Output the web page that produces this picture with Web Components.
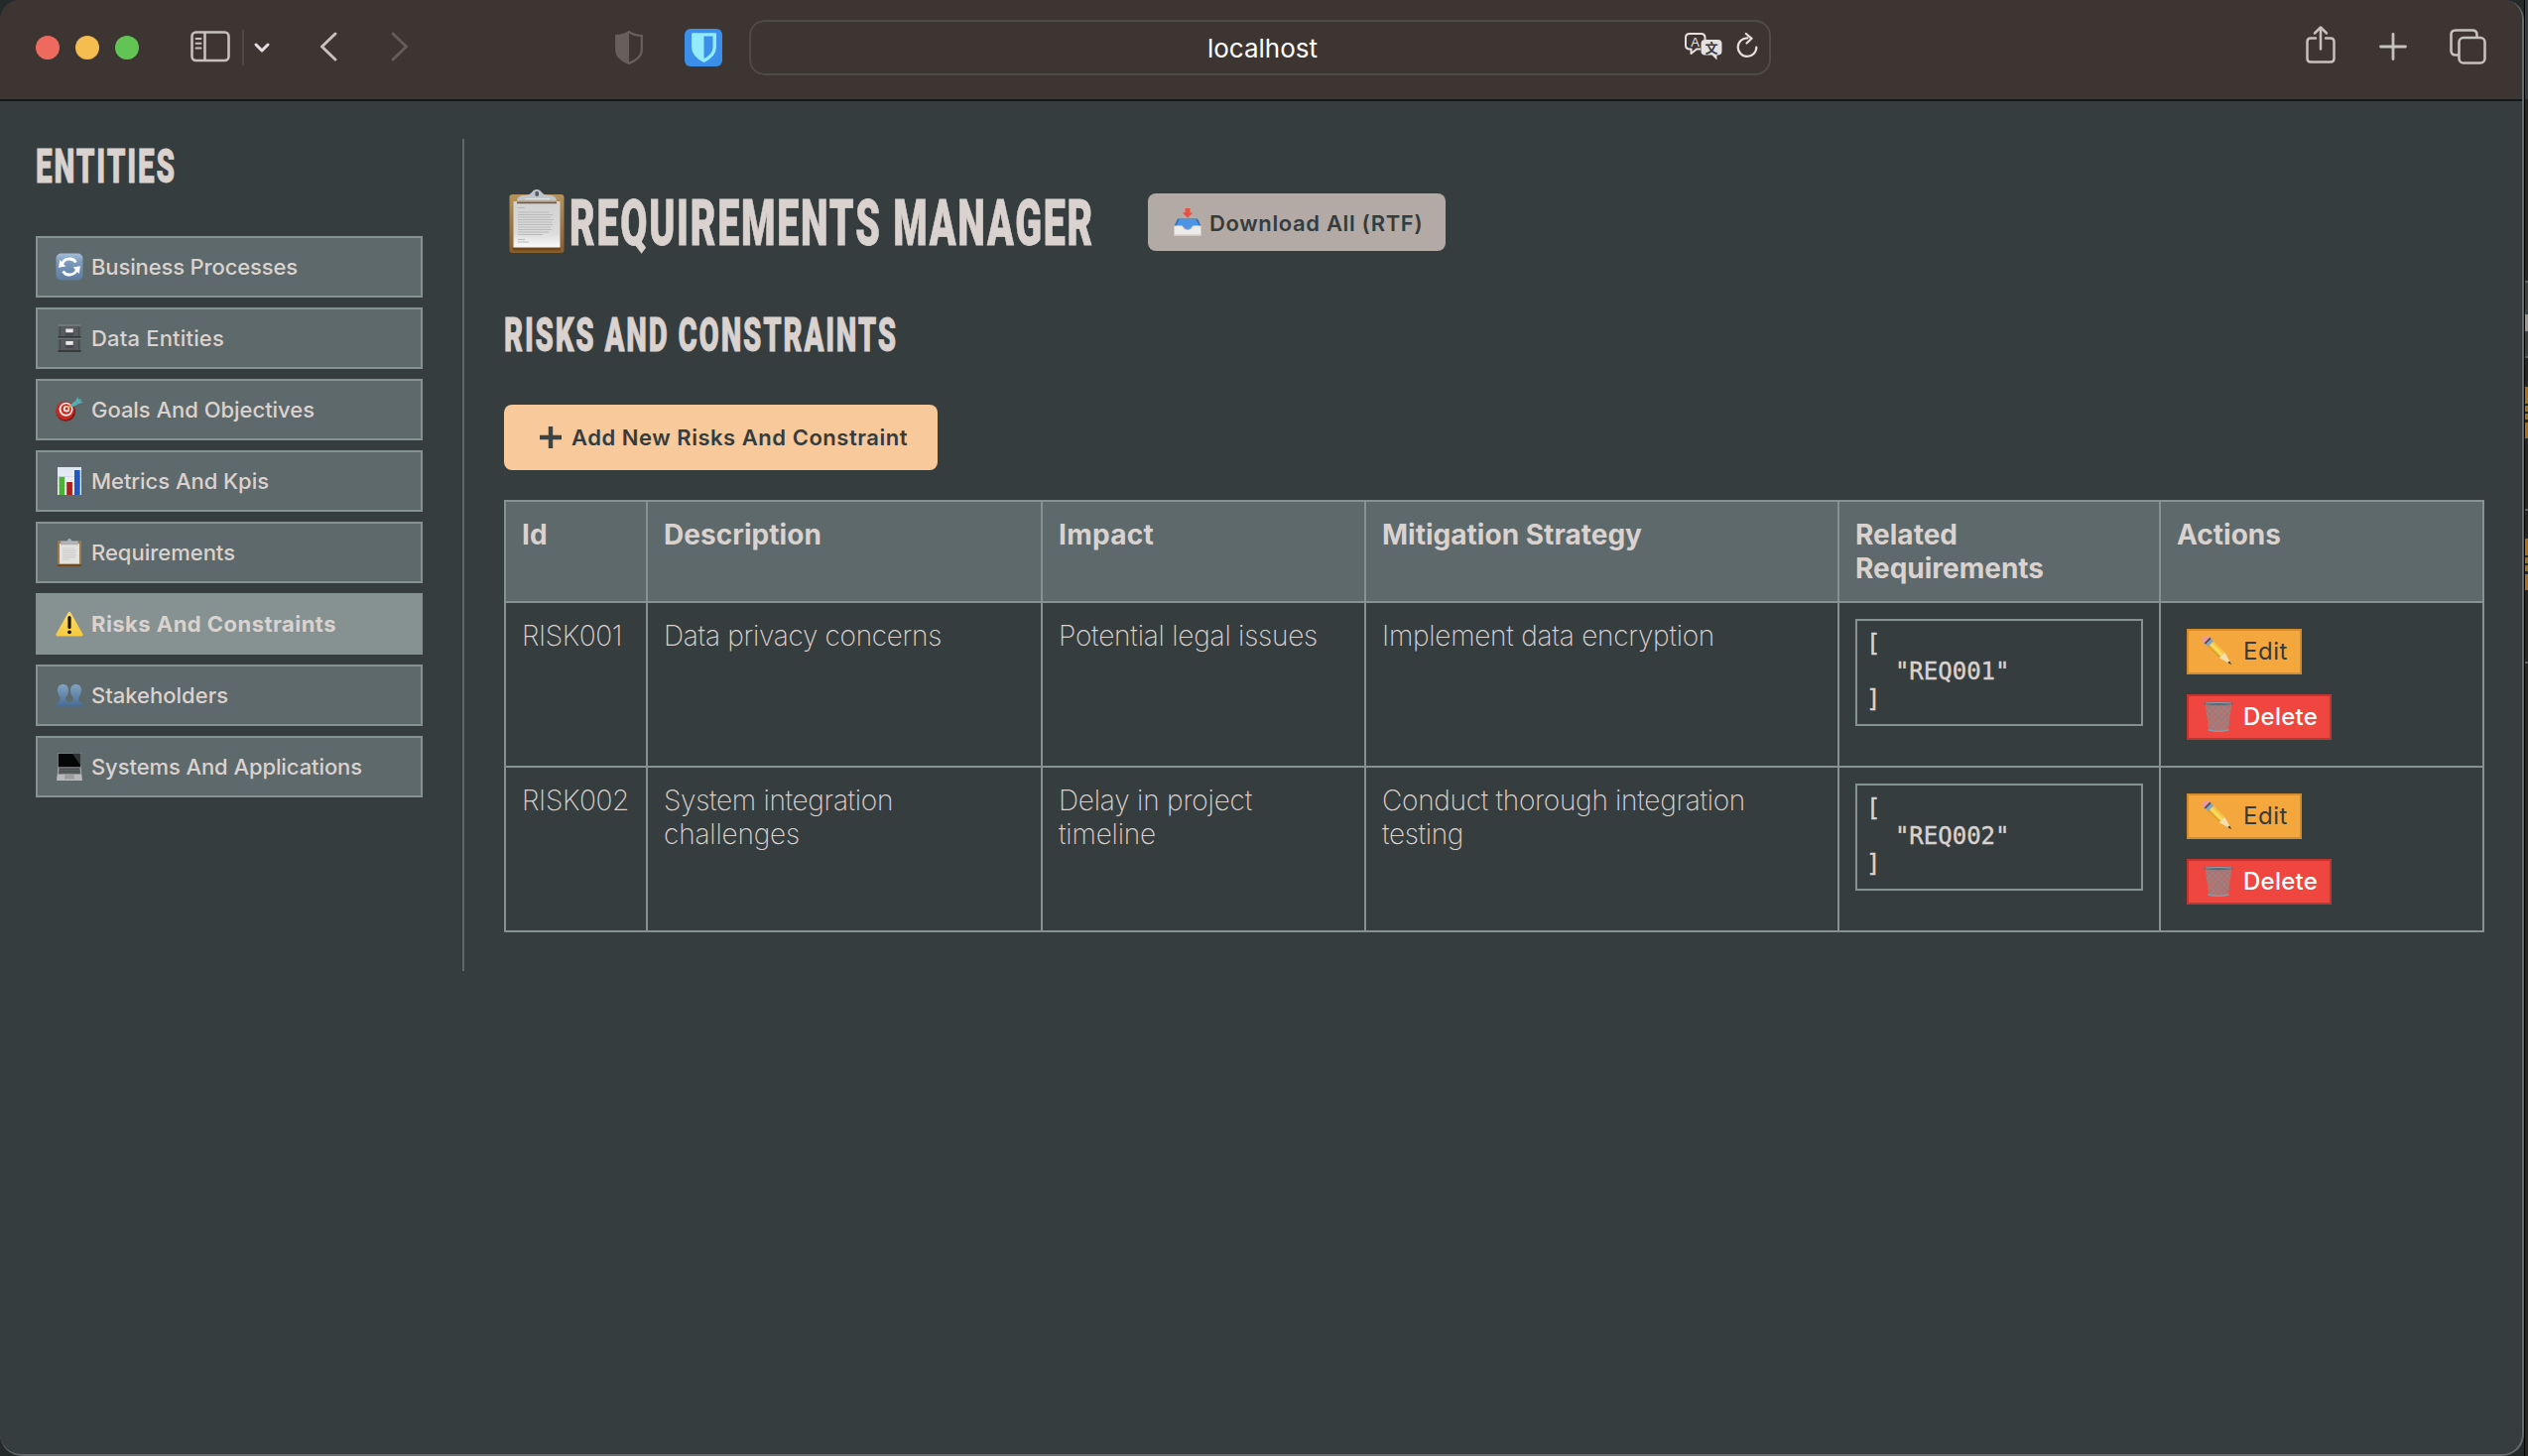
<!DOCTYPE html>
<html lang="en">
<head>
<meta charset="utf-8">
<title>Requirements Manager</title>
<style>
html,body{margin:0;padding:0}
body{width:2548px;height:1468px;overflow:hidden;background:#24292a;font-family:Inter,"Liberation Sans",sans-serif;color:#dad2cf}
</style>
</head>
<body>
<app-desktop></app-desktop>
<script>
const ICONS = {
sync:['0 0 28 28','<defs><linearGradient id="g" x2="0" y2="1"><stop stop-color="#a5bdd8"/><stop offset=".3" stop-color="#7d9dbf"/><stop offset="1" stop-color="#5c7b9e"/></linearGradient></defs><rect x=".5" y=".5" width="27" height="27" rx="5" fill="url(#g)"/><g fill="none" stroke="#fff" stroke-width="2.8"><path d="M6 12.5C8 5 17 4 20.500 9.500"/><path d="M22 15.500C20 23 11 24 7.500 18.500"/></g><path d="M3.300 8.500v7.800l7-2.200zM24.700 19.500v-7.800l-7 2.200z" fill="#fff" transform="rotate(8 14 14)"/>'],
cabinet:['0 0 28 28','<rect x="2.500" y="0" width="23" height="28" fill="#565b5e"/><path d="M2.500 1h23M2.500 14h23" stroke="#8b8f91" stroke-width="1.200"/><path d="M2.500 27h23M2.500 12.800h23" stroke="#35393c" stroke-width="1.800"/><path d="M4.500 2v10M23.500 2v10M4.500 15v10.500M23.500 15v10.500" stroke="#44494c"/><rect x="9.800" y="7.500" width="8.400" height="4" rx="1" fill="#45494b"/><rect x="9.800" y="20" width="8.400" height="4" rx="1" fill="#45494b"/><rect x="10.300" y="4.500" width="7.400" height="3.800" fill="#e8e8e8"/><rect x="10.300" y="17" width="7.400" height="3.800" fill="#e8e8e8"/>'],
target:['0 0 28 28','<circle cx="10.300" cy="16" r="9.800" fill="#7e1510"/><circle cx="9.600" cy="14.800" r="9.400" fill="#c22a20"/><circle cx="10.500" cy="13.800" r="7" fill="#f1e7e4"/><circle cx="10.700" cy="13.500" r="5.200" fill="#c9281f"/><circle cx="11" cy="13.300" r="3.200" fill="#f1e7e4"/><circle cx="11.200" cy="13.100" r="1.500" fill="#b8231a"/><path d="M12 12.500L19 7.500" stroke="#d7b54a" stroke-width="1.500"/><path d="M14.500 9.500L20 5.300l2.500-4.300 .6 2.800 3-.6-1 2.400 2.900.8-5 1.800-6.200 3.400z" fill="#56aeb4"/>'],
chart:['0 0 28 28','<defs><linearGradient id="c" x2="0" y2="1"><stop stop-color="#dfe7f2"/><stop offset="1" stop-color="#f4f5f6"/></linearGradient></defs><rect x="2" y="0" width="24" height="28" fill="url(#c)"/><path d="M2 9.500h24M2 18.500h24" stroke="#c9d3de" stroke-width=".7"/><rect x="3.500" y="9.800" width="5.700" height="18.200" fill="#4eb137"/><rect x="11.200" y="15" width="5.700" height="13" fill="#ac2019"/><rect x="19" y="3" width="5.700" height="25" fill="#2057c0"/>'],
clip:['0 0 58 64','<defs><linearGradient id="w" x2="0" y2="1"><stop stop-color="#b4935c"/><stop offset="1" stop-color="#855e2c"/></linearGradient><linearGradient id="p" x2="0" y2="1"><stop stop-color="#d2d2d2"/><stop offset=".7" stop-color="#dcdcdc"/><stop offset="1" stop-color="#fafafa"/></linearGradient></defs><rect x="1.500" y="5" width="55" height="59" rx="3" fill="url(#w)"/><path d="M5 58h48v3.500H5z" fill="#6d4719"/><path d="M5.500 12h47v46.500h-47z" fill="url(#p)"/><path d="M9 12.500h40v1.700H9z" fill="#68584b"/><path d="M9 11.500c0-6 7-5.300 11-6 4-.8 4.500-5.500 9-5.500s5 4.700 9 5.500c4 .7 11 0 11 6z" fill="#bfc5cd"/><path d="M17 9.500h25" stroke="#dfe3e7"/><rect x="27.400" y="1.700" width="3.600" height="5.300" rx="1.800" fill="#535c61"/><g stroke="#bababa" stroke-width="1.100"><path d="M10 18.500h7M10 23h31M10 25.500h35M10 28h33M10 30.500h36M10 33h34M10 35.500h35M10 38h33M10 40.500h34M10 43h31M10 45.500h25M10 50.500h7M10 53h11"/></g>'],
clipsmall:['0 0 28 28','<rect x="2" y="2" width="24" height="26" rx="1.200" fill="#9b7a4c"/><path d="M2 26h24v2H2z" fill="#6d4922"/><path d="M4 5h20v20.500H4z" fill="#e3e2e0"/><path d="M5 5.800h18M5 2.500h18V5H5z" fill="#b9bdc2" stroke="#8a8580" stroke-width=".5"/><path d="M11 3.500c1-1.500 1.500-3.500 3-3.500s2 2 3 3.500z" fill="#9fb2bd"/><path d="M7 10h12M7 12.200h14M7 14.400h13M7 16.600h14M7 18.800h13M7 21h7" stroke="#cecdcc" stroke-width="1.200"/>'],
warn:['0 0 28 28','<defs><linearGradient id="y" x2="0" y2="1"><stop stop-color="#fbdc68"/><stop offset="1" stop-color="#f7c93f"/></linearGradient></defs><path d="M12.600 2.800Q14 .7 15.400 2.800L27.600 24.500Q28 26.200 26.300 26.500H1.700Q0 26.200.4 24.500z" fill="url(#y)"/><path d="M14 7.500v10" stroke="#1a1508" stroke-width="3.200" stroke-linecap="round"/><circle cx="14" cy="22.300" r="1.900" fill="#1a1508"/>'],
people:['0 0 28 28','<defs><linearGradient id="b" x2="0" y2="1"><stop stop-color="#83a4c1"/><stop offset="1" stop-color="#456b92"/></linearGradient></defs><path d="M20.500 3c3.500 0 5.600 2.300 5.500 6 0 3.500-1.400 5.500-2.700 7v3c1 1.500 4.300 1.600 4.300 6.500H13c0-5 3.700-5 4.700-6.500v-3c-1.300-1.500-2.700-3.500-2.700-7 0-3.700 2-6 5.500-6z" fill="url(#b)"/><path d="M7.500 3c3.500 0 5.600 2.300 5.500 6 0 3.500-1.400 5.500-2.700 7v3c1 1.500 4.700 1.600 4.700 6.500H.4c0-5 3.300-5 4.300-6.500v-3C3.400 14.500 2 12.500 2 9c0-3.700 2-6 5.500-6z" fill="url(#b)"/>'],
laptop:['0 0 28 28','<rect x="2" y="0" width="24" height="15" fill="#8d9294"/><rect x="2.800" y=".8" width="22.400" height="13.500" fill="#050606"/><path d="M17 .8h8.200v12z" fill="#303335"/><path d="M2.500 15h23L27 28H1z" fill="#b7b9ba"/><path d="M3.300 15h21.400l.7 6.500H2.600z" fill="#686b6d"/><path d="M4 16.500h20M3.700 18.300h20.600M3.500 20h21" stroke="#3e4143" stroke-width=".8"/><path d="M9.500 22h9l.7 4.500H8.800z" fill="#9b9d9f"/>'],
inbox:['0 0 28 28','<path d="M4 10.500h20L27.500 18H.5z" fill="#2d6fb0"/><path d="M5.500 11h17L26 18.500h-8L14 22l-4-3.500H2z" fill="#4b94e6"/><path d="M.5 17.500h7.800c1 0 .8 4.300 5.700 4.300s4.700-4.300 5.700-4.300h7.800V28H.5z" fill="#ecebea"/><path d="M.5 27.200h27" stroke="#d0cbc7" stroke-width="1.500"/><path d="M11.500 0h5v4.500h2.800L14 9.800 8.700 4.500h2.800z" fill="#e85143"/>'],
plusdark:['0 0 22 22','<path d="M11 0v22M0 11h22" stroke="#3b4345" stroke-width="4.400"/>'],
pencil:['0 0 30 30','<g transform="rotate(45 15 15)"><path d="M3 11h17v8H3z" fill="#f6c643"/><path d="M3 13.500h17v2.500H3z" fill="#fbdc63"/><path d="M3 17h17v2H3z" fill="#dca02c"/><path d="M20 11l13.500 4L20 19z" fill="#f4dfae"/><path d="M29.500 13.800l4.300 1.200-4.300 1.200z" fill="#2f2b28"/><path d="M-.5 11H4v8H-.5z" fill="#8ba3b5"/><path d="M-1.500 11h2v8h-2z" fill="#4a4f58"/><path d="M-1.500 11v8h-1.800q-2.700-.5-2.700-4t2.700-4z" fill="#ec9aa0"/></g>'],
trash:['0 0 30 32','<path d="M1.500 3L5.300 29q9.700 2.500 19.400 0L28.500 3z" fill="#b0716f"/><path d="M3 7l20 21M6 4l20 20M12 4l14 15M18 4l9 9M3.500 13l16 16M5 20l9 9M27 7L7 28M24 4L4 24M18 4L4 18M12 4L3 13M26 14L11 29M25.500 20l-9 9" stroke="#918a8d" stroke-width="1" fill="none"/><path d="M4.500 28q10.500 3 21 0v1.800q-10.500 2.500-21 0z" fill="#8c9aa3"/><path d="M.5 1.500Q15-.5 29.500 1.500v1.800Q15 5.300.5 3.300z" fill="#5d6a75"/><path d="M2 2q13-1.300 26 0" stroke="#93a3ae" fill="none"/>'],
sidebar:['0 0 40 32','<g fill="none" stroke="#c5c1bf" stroke-width="2.600"><rect x="1.500" y="1.500" width="37" height="28.500" rx="4"/><path d="M14.500 1.500V30"/></g><path d="M5.500 8h5M5.500 12.800h5M5.500 17.500h5" stroke="#c5c1bf" stroke-width="2" stroke-linecap="round"/>'],
chev:['0 0 16 10','<path d="M2 2l6 6 6-6" fill="none" stroke="#e4e1e0" stroke-width="3" stroke-linecap="round" stroke-linejoin="round"/>'],
back:['0 0 18 30','<path d="M16 2L2.500 15 16 28" fill="none" stroke="#c5c1bf" stroke-width="3" stroke-linecap="round" stroke-linejoin="round"/>'],
fwd:['0 0 18 30','<path d="M2 2l13.500 13L2 28" fill="none" stroke="#635d5a" stroke-width="3" stroke-linecap="round" stroke-linejoin="round"/>'],
shield:['0 0 28 34','<path d="M14 1.200Q19 4.800 26.800 5v14Q26.800 28 14 32.800 1.200 28 1.200 19V5Q9 4.800 14 1.200z" fill="none" stroke="#66605d" stroke-width="2.200"/><path d="M14 1.200V32.800Q1.200 28 1.200 19V5Q9 4.800 14 1.200z" fill="#66605d"/>'],
bit:['0 0 38 38','<rect width="38" height="38" rx="6" fill="#3b8fe8"/><path d="M7 5.500Q7 4.300 8.200 4.300H30.800Q32 4.300 32 5.500V18Q32 28 19.500 34 7 28 7 18z" fill="#93ebff"/><path d="M19.500 7.500H28.500V18.500Q28.500 25.500 19.500 30z" fill="#3b8fe8"/>'],
reload:['0 0 22 27','<path d="M11.500 5.300A9.300 9.300 0 1 0 20.300 14.500" fill="none" stroke="#e4e1e0" stroke-width="2.200" stroke-linecap="round"/><path d="M9.800 1l5.800 4.800L10.500 10.500" fill="none" stroke="#e4e1e0" stroke-width="2.200" stroke-linecap="round" stroke-linejoin="round"/>'],
share:['0 0 30 38','<g fill="none" stroke="#c5c1bf" stroke-width="2.500" stroke-linecap="round" stroke-linejoin="round"><path d="M10 12.500H5Q1.500 12.500 1.500 16V33Q1.500 36.500 5 36.500H25Q28.500 36.500 28.500 33V16Q28.500 12.500 25 12.500H20"/><path d="M15 23.500V2M9 7.500l6-6 6 6"/></g>'],
plus:['0 0 28 28','<path d="M14 1.500v25M1.500 14h25" stroke="#c5c1bf" stroke-width="2.800" stroke-linecap="round"/>'],
tabs:['0 0 37 36','<g fill="none" stroke="#c5c1bf" stroke-width="2.600"><path d="M9 26.500H6Q1.500 26.500 1.500 22V6Q1.500 1.500 6 1.500H23Q27.500 1.500 27.500 6V9"/><rect x="9.500" y="9" width="26" height="25.500" rx="4.500"/></g>']
};
function define(name, css, html, init){
  customElements.define(name, class extends HTMLElement{
    constructor(){super();this.attachShadow({mode:'open'});}
    connectedCallback(){
      const markup = typeof html==='function'?html(this):html;
      this.shadowRoot.innerHTML='<style>'+css+'</style>'+markup;
      if(init)init(this);
    }
  });
}
define('ui-icon',':host{display:block;flex:none}svg{display:block;width:100%;height:100%;overflow:visible}',
  el=>{const i=ICONS[el.getAttribute('name')];const w=el.getAttribute('w'),h=el.getAttribute('h');
  el.style.width=w+'px';el.style.height=h+'px';
  return `<svg viewBox="${i[0]}" preserveAspectRatio="none">${i[1]}</svg>`;});

/* One line of text set to a given advance width, by tracking or by condensing. */
define('fit-text',':host{display:block;flex:none;white-space:nowrap}span{display:inline-block;transform-origin:0 50%}',
  '<span></span>',el=>{
  const s=el.shadowRoot.querySelector('span');s.textContent=el.getAttribute('text');
  const w=+el.getAttribute('w');el.style.width=w+'px';
  const n=s.getBoundingClientRect().width;
  if(el.hasAttribute('condense'))s.style.transform=`scaleX(${w/n})`;
  else s.style.letterSpacing=((w-n)/s.textContent.length)+'px';
});

define('ui-translate',`:host{display:block;width:38px;height:28px}
svg{display:block;overflow:visible}text{font-family:"Liberation Sans",sans-serif}.z{font-family:"Noto Sans CJK SC",sans-serif;font-weight:700}`,
`<svg width="38" height="28" viewBox="0 0 38 28"><path d="M16 16.500h-4L6.500 21v-4.500H5Q1 16.500 1 12.500V5Q1 1 5 1H16.500Q20.500 1 20.500 5V7" fill="none" stroke="#e4e1e0" stroke-width="2" stroke-linejoin="round"/><path d="M20.500 7H33.500Q37.500 7 37.500 11V18.500Q37.500 22.500 33.500 22.500H32.500V27.500L27.500 22.500H20.500Q16.500 22.500 16.500 18.500V11Q16.500 7 20.500 7z" fill="#e4e1e0"/><text x="6.200" y="13.500" font-size="13" fill="#e4e1e0">A</text><text class="z" x="20.500" y="19.500" font-size="13" fill="#3c3532">文</text></svg>`);

define('browser-bar',`
:host{display:flex;align-items:flex-start;box-sizing:border-box;height:102px;background:#3c3532;border-bottom:2px solid #14181a}
.l,.c,.r{display:flex;align-items:center;height:96px}
.l{width:755px}
.dot{width:24px;height:24px;border-radius:50%;margin-right:16px}
.sep{width:2px;height:36px;background:#4e4845;margin-left:12px}
.url{display:flex;align-items:center;box-sizing:border-box;width:1030px;height:56px;border:2px solid #514b48;border-radius:16px;padding-left:460px}
.r{flex:1;justify-content:flex-end;padding-right:36px}
fit-text{color:#fff;font-size:26px;line-height:50px;padding-top:2px}`,
`<div class="l"><span class="dot" style="margin-left:36px;background:#ee6a5f"></span><span class="dot" style="background:#f5bd4f"></span><span class="dot" style="background:#61c454"></span>
<ui-icon name="sidebar" w="40" h="32" style="margin-left:36px;margin-top:-2px"></ui-icon><span class="sep"></span>
<ui-icon name="chev" w="16" h="10" style="margin-left:10px"></ui-icon>
<ui-icon name="back" w="18" h="30" style="margin-left:50px;margin-top:-2px"></ui-icon>
<ui-icon name="fwd" w="18" h="30" style="margin-left:54px;margin-top:-2px"></ui-icon>
<ui-icon name="shield" w="28" h="34" style="margin-left:208px;margin-top:-1px"></ui-icon>
<ui-icon name="bit" w="38" h="38" style="margin-left:42px"></ui-icon></div>
<div class="c"><div class="url"><fit-text text="localhost" w="111"></fit-text><ui-translate style="margin-left:370px;margin-top:-3px"></ui-translate><ui-icon name="reload" w="22" h="27" style="margin-left:14px;margin-top:-3px"></ui-icon></div></div>
<div class="r"><ui-icon name="share" w="30" h="38" style="margin-top:-6px"></ui-icon><ui-icon name="plus" w="28" h="28" style="margin:-3px 43px 0 44px"></ui-icon><ui-icon name="tabs" w="37" h="36" style="margin-top:-3px"></ui-icon></div>`);

define('ui-heading',`:host{display:block;font-family:Roboto,sans-serif;font-weight:900;line-height:60px;height:60px;letter-spacing:3px;text-transform:uppercase;color:#dad2cf;-webkit-text-stroke:.8px #dad2cf}`,
  el=>`<fit-text condense text="${el.getAttribute('text')}" w="${el.getAttribute('w')}"></fit-text>`);

define('nav-item',`:host{display:flex;align-items:center;box-sizing:border-box;height:62px;border:2px solid #869191;background:#5e696b;padding-left:18px;font-size:22px;font-weight:450;line-height:58px}
:host([active]){background:#869191;font-weight:750}fit-text{margin-left:8px}`,
  el=>`<ui-icon name="${el.getAttribute('icon')}" w="28" h="28"></ui-icon><fit-text text="${el.getAttribute('label')}" w="${el.getAttribute('w')}"></fit-text>`);

define('side-nav',`:host{display:block;width:390px;padding-top:36px;margin-left:36px}
ui-heading{font-size:49px;margin-bottom:40px}nav{display:flex;flex-direction:column;gap:10px}`,
`<ui-heading text="Entities" w="142"></ui-heading><nav>
<nav-item icon="sync" label="Business Processes" w="208"></nav-item>
<nav-item icon="cabinet" label="Data Entities" w="134"></nav-item>
<nav-item icon="target" label="Goals And Objectives" w="225"></nav-item>
<nav-item icon="chart" label="Metrics And Kpis" w="179"></nav-item>
<nav-item icon="clipsmall" label="Requirements" w="145"></nav-item>
<nav-item icon="warn" label="Risks And Constraints" w="247" active></nav-item>
<nav-item icon="people" label="Stakeholders" w="138"></nav-item>
<nav-item icon="laptop" label="Systems And Applications" w="273"></nav-item></nav>`);

define('ui-button',`:host{display:flex;align-items:center;box-sizing:border-box;color:#353c3e;flex:none}
:host([kind=download]){width:300px;height:58px;background:#b3aaa5;border-radius:8px;padding-left:26px;font-size:22px;font-weight:600;--gap:8px}
:host([kind=add]){width:437px;height:66px;background:#f8c99b;border-radius:8px;padding-left:36px;font-size:22px;font-weight:600;--gap:10px}
:host([kind=edit]){width:116px;height:46px;background:#f3a73c;border:2px solid #d18d30;padding-left:15px;font-size:24px;--gap:10px}
:host([kind=delete]){width:146px;height:46px;background:#ef473f;border:2px solid #bd3632;padding-left:15px;font-size:24px;font-weight:500;color:#fff;--gap:10px}
fit-text{margin-left:var(--gap);padding-top:var(--dy,0)}`,
  el=>{const a=n=>el.getAttribute(n);return `<ui-icon name="${a('icon')}" w="${a('iw')}" h="${a('ih')}"></ui-icon><fit-text text="${a('label')}" w="${a('w')}"></fit-text>`;});

define('json-box',`:host{display:block;box-sizing:border-box;height:108px;border:2px solid #869191;padding:9px 10px;font:24px/28px "DejaVu Sans Mono",monospace;-webkit-text-stroke:.4px #dad2cf}pre{margin:0 0 0 -1px;font:inherit}`,
  el=>`<pre>[
  "${el.getAttribute('value')}"
]</pre>`);

const lines = l => l.map(([t,w])=>`<fit-text text="${t}" w="${w}"></fit-text>`).join('');
define('data-table',`:host{display:grid;box-sizing:border-box;width:1996px;grid-template-columns:143px 398px 326px 477px 324px 326px;grid-template-rows:102px 166px 166px;border-left:2px solid #869191;border-top:2px solid #869191;font-size:28px;line-height:34px}
div{box-sizing:border-box;border-right:2px solid #869191;border-bottom:2px solid #869191;padding:16px 15px 0 16px;font-weight:200;min-width:0}
.h{background:#5e696b;font-weight:700}.j{padding:16px 16px 0}.a{display:flex;flex-direction:column;gap:20px;padding:26px 26px 0;font-weight:400}`,
()=>{
 const head=[[['Id',26]],[['Description',159]],[['Impact',96]],[['Mitigation Strategy',262]],[['Related',103],['Requirements',190]],[['Actions',105]]];
 const rows=[
  {c:[[['RISK001',101]],[['Data privacy concerns',280]],[['Potential legal issues',261]],[['Implement data encryption',335]]],r:'REQ001'},
  {c:[[['RISK002',108]],[['System integration',231],['challenges',137]],[['Delay in project',195],['timeline',98]],[['Conduct thorough integration',366],['testing',82]]],r:'REQ002'}];
 return head.map(h=>`<div class="h">${lines(h)}</div>`).join('')+rows.map(r=>r.c.map(c=>`<div>${lines(c)}</div>`).join('')+
 `<div class="j"><json-box value="${r.r}"></json-box></div><div class="a"><ui-button kind="edit" icon="pencil" iw="30" ih="30" label="Edit" w="45"></ui-button><ui-button kind="delete" icon="trash" iw="30" ih="32" label="Delete" w="75"></ui-button></div>`).join('');
});

define('main-view',`:host{display:block;width:1996px;padding-top:92px}
.t{display:flex;align-items:center;height:60px;padding-left:4px}
.t ui-heading{font-size:65px;margin:2px 54px 0 4px}
.s{font-size:49px;margin:54px 0 40px}
data-table{margin-top:30px}`,
`<div class="t"><ui-icon name="clip" w="58" h="64" style="margin-top:-2px"></ui-icon><ui-heading text="Requirements Manager" w="529"></ui-heading>
<ui-button kind="download" icon="inbox" iw="28" ih="28" label="Download All (RTF)" w="215" style="--dy:1px"></ui-button></div>
<ui-heading class="s" text="Risks And Constraints" w="397"></ui-heading>
<ui-button kind="add" icon="plusdark" iw="22" ih="22" label="Add New Risks And Constraint" w="339"></ui-button>
<data-table></data-table>`);

define('app-window',`:host{display:block;box-sizing:border-box;width:2544px;height:1468px;border-right:2px solid #63686a;border-bottom:2px solid #63686a;border-radius:20px 20px 22px 22px;overflow:hidden;background:#363d3f}
.p{display:flex}.d{width:2px;height:839px;margin:38px 40px 0;background:#5e696b}`,
`<browser-bar></browser-bar><div class="p"><side-nav></side-nav><div class="d"></div><main-view></main-view></div>`);

/* Sliver of the window behind, visible along the right edge. */
define('back-sliver',`:host{display:block;width:4px;height:1468px;border-left:1px solid #000;box-sizing:border-box}svg{display:block}`,
`<svg width="3" height="1468"><rect width="3" height="1468" fill="#272826"/><rect width="3" height="100" fill="#343d40"/><rect y="283" width="3" height="78" fill="#3c4442"/><path d="M0 284h3M0 360h3M0 514h3M0 668h3" stroke="#5b605f" stroke-width="2"/><rect y="317" width="3" height="17" fill="#9b918c"/><g fill="#a56d20"><path d="M0 390h3v17H0zM0 409h3v6H0zM0 417h3v6H0zM0 426h3v16H0zM0 543h3v17H0zM0 562h3v6H0zM0 570h3v6H0zM0 579h3v16H0z"/></g></svg>`);
define('app-desktop',`:host{display:flex;width:2548px;height:1468px}`,`<app-window></app-window><back-sliver></back-sliver>`);
</script>
</body>
</html>
